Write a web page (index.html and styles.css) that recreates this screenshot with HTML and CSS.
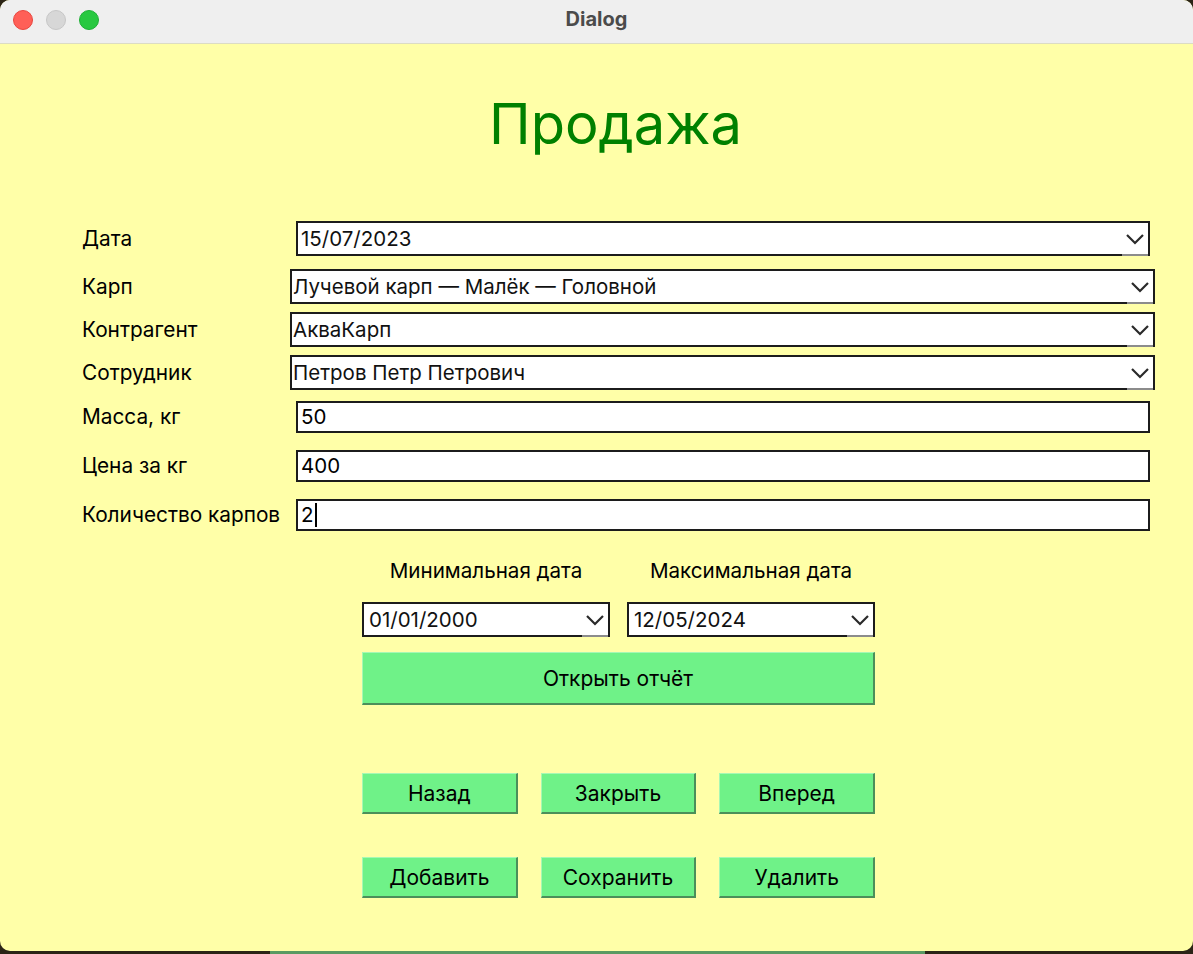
FILE: index.html
```html
<!DOCTYPE html>
<html lang="ru">
<head>
<meta charset="utf-8">
<title>Dialog</title>
<link rel="stylesheet" href="styles.css">
</head>
<body>
<div class="window">
  <div class="titlebar">
    <div class="lights">
      <span class="light light-red"></span>
      <span class="light light-gray"></span>
      <span class="light light-green"></span>
    </div>
    <div class="title">Dialog</div>
    <div></div>
  </div>
  <div class="content">
    <h1 class="heading">Продажа</h1>
    <div class="form">
      <div class="row r1">
        <div class="label">Дата</div>
        <div class="combo inset"><span class="value">15/07/2023</span><span class="arrow"><svg width="20" height="12" viewBox="0 0 20 12"><path d="M2 2 L10 10 L18 2" fill="none" stroke="#2a2a2a" stroke-width="2.2"/></svg></span></div>
      </div>
      <div class="row r2">
        <div class="label">Карп</div>
        <div class="combo wide"><span class="value">Лучевой карп — Малёк — Головной</span><span class="arrow"><svg width="20" height="12" viewBox="0 0 20 12"><path d="M2 2 L10 10 L18 2" fill="none" stroke="#2a2a2a" stroke-width="2.2"/></svg></span></div>
      </div>
      <div class="row r3">
        <div class="label">Контрагент</div>
        <div class="combo wide"><span class="value">АкваКарп</span><span class="arrow"><svg width="20" height="12" viewBox="0 0 20 12"><path d="M2 2 L10 10 L18 2" fill="none" stroke="#2a2a2a" stroke-width="2.2"/></svg></span></div>
      </div>
      <div class="row r3">
        <div class="label">Сотрудник</div>
        <div class="combo wide"><span class="value">Петров Петр Петрович</span><span class="arrow"><svg width="20" height="12" viewBox="0 0 20 12"><path d="M2 2 L10 10 L18 2" fill="none" stroke="#2a2a2a" stroke-width="2.2"/></svg></span></div>
      </div>
      <div class="row r5">
        <div class="label">Масса, кг</div>
        <div class="field inset">50</div>
      </div>
      <div class="row r6">
        <div class="label">Цена за кг</div>
        <div class="field inset">400</div>
      </div>
      <div class="row r6">
        <div class="label">Количество карпов</div>
        <div class="field inset">2<span class="caret"></span></div>
      </div>
    </div>

    <div class="report">
      <div class="pair captions">
        <div class="caption">Минимальная дата</div>
        <div class="caption">Максимальная дата</div>
      </div>
      <div class="pair dates">
        <div class="combo small"><span class="value">01/01/2000</span><span class="arrow"><svg width="20" height="12" viewBox="0 0 20 12"><path d="M2 2 L10 10 L18 2" fill="none" stroke="#2a2a2a" stroke-width="2.2"/></svg></span></div>
        <div class="combo small"><span class="value">12/05/2024</span><span class="arrow"><svg width="20" height="12" viewBox="0 0 20 12"><path d="M2 2 L10 10 L18 2" fill="none" stroke="#2a2a2a" stroke-width="2.2"/></svg></span></div>
      </div>
      <button class="btn btn-report">Открыть отчёт</button>
      <div class="triple nav">
        <button class="btn">Назад</button>
        <button class="btn">Закрыть</button>
        <button class="btn">Вперед</button>
      </div>
      <div class="triple actions">
        <button class="btn">Добавить</button>
        <button class="btn">Сохранить</button>
        <button class="btn">Удалить</button>
      </div>
    </div>
  </div>
</div>
<div class="desk"><span class="desk-btn"></span></div>
</body>
</html>
```

FILE: styles.css
```css
* { box-sizing: border-box; }
html, body { margin: 0; padding: 0; }
body {
  width: 1193px;
  height: 954px;
  overflow: hidden;
  background: #2b2416;
  font-family: Inter, "Noto Sans", "Liberation Sans", sans-serif;
  color: #000;
}
.window {
  width: 1193px;
  height: 951px;
  border-radius: 10px;
  overflow: hidden;
  background: #ffffa8;
  display: flex;
  flex-direction: column;
}
.titlebar {
  flex: none;
  height: 44px;
  background: #efefef;
  border-bottom: 1px solid #dcdcc4;
  display: grid;
  grid-template-columns: 1fr auto 1fr;
  align-items: start;
}
.lights {
  display: flex;
  gap: 13px;
  padding: 10px 0 0 13px;
}
.light {
  width: 20px;
  height: 20px;
  border-radius: 50%;
  display: block;
}
.light-red { background: #ff5f57; border: 1px solid #e8463e; }
.light-gray { background: #d7d7d7; border: 1px solid #c6c6c6; }
.light-green { background: #28c840; border: 1px solid #1faf36; }
.title {
  padding-top: 7px;
  font-weight: 700;
  font-size: 20px;
  line-height: 24px;
  color: #4b4b4b;
}
.content { flex: 1; }
.heading {
  margin: 48px 0 0 0;
  text-align: center;
  font-weight: 400;
  font-size: 56px;
  line-height: 64px;
  color: #008000;
  padding-left: 38px;
}
.form {
  margin-left: 82px;
  width: 1073px;
}
.row {
  display: flex;
  align-items: center;
}
.r1 { margin-top: 65px; }
.r2 { margin-top: 13px; }
.r3 { margin-top: 8px; }
.r5 { margin-top: 11px; }
.r6 { margin-top: 17px; }
.label {
  width: 208px;
  flex: none;
  font-size: 20.8px;
  line-height: 24px;
  white-space: nowrap;
}
.inset { margin: 0 5px 0 6px; }
.combo {
  flex: 1;
  height: 35px;
  background: #fff;
  border: 2px solid #1c1c1c;
  display: flex;
  align-items: center;
  font-size: 20.5px;
  color: #111;
}
.combo .value {
  flex: 1;
  padding-left: 1px;
  white-space: nowrap;
}
.combo.inset .value { padding-left: 3px; }
.arrow {
  flex: none;
  width: 26px;
  align-self: stretch;
  display: flex;
  align-items: center;
  justify-content: center;
  border-bottom: 2px solid #8c8c8c;
  margin-bottom: -2px;
  padding-top: 1px;
}
.field {
  flex: 1;
  height: 32px;
  background: #fff;
  border: 2px solid #1c1c1c;
  font-size: 20.5px;
  line-height: 28px;
  padding-left: 3px;
  display: flex;
  align-items: center;
}
.caret {
  display: inline-block;
  width: 2px;
  height: 24px;
  background: #000;
  margin-left: 1px;
}
.report {
  margin-left: 362px;
  width: 513px;
}
.pair {
  display: grid;
  grid-template-columns: 1fr 1fr;
  gap: 17px;
}
.captions { margin-top: 28px; }
.caption {
  text-align: center;
  font-size: 20.6px;
  line-height: 24px;
  white-space: nowrap;
}
.dates { margin-top: 19px; }
.combo.small .value { padding-left: 5px; }
.btn {
  display: block;
  width: 100%;
  margin: 0;
  font-family: inherit;
  font-size: 21px;
  color: #000;
  background: #6ff288;
  border: none;
  border-top: 1px solid #a6f8b4;
  border-left: 1px solid #a6f8b4;
  border-right: 2px solid #4c8f5a;
  border-bottom: 2px solid #4c8f5a;
  padding: 0;
  cursor: pointer;
}
.btn-report {
  margin-top: 15px;
  height: 53px;
}
.triple {
  display: grid;
  grid-template-columns: 1fr 1fr 1fr;
  gap: 23px;
}
.triple .btn { height: 41px; }
.nav { margin-top: 68px; }
.actions { margin-top: 43px; }
.desk {
  height: 3px;
  display: flex;
  padding-left: 270px;
}
.desk-btn {
  width: 655px;
  height: 3px;
  background: #5a9a62;
}
```
